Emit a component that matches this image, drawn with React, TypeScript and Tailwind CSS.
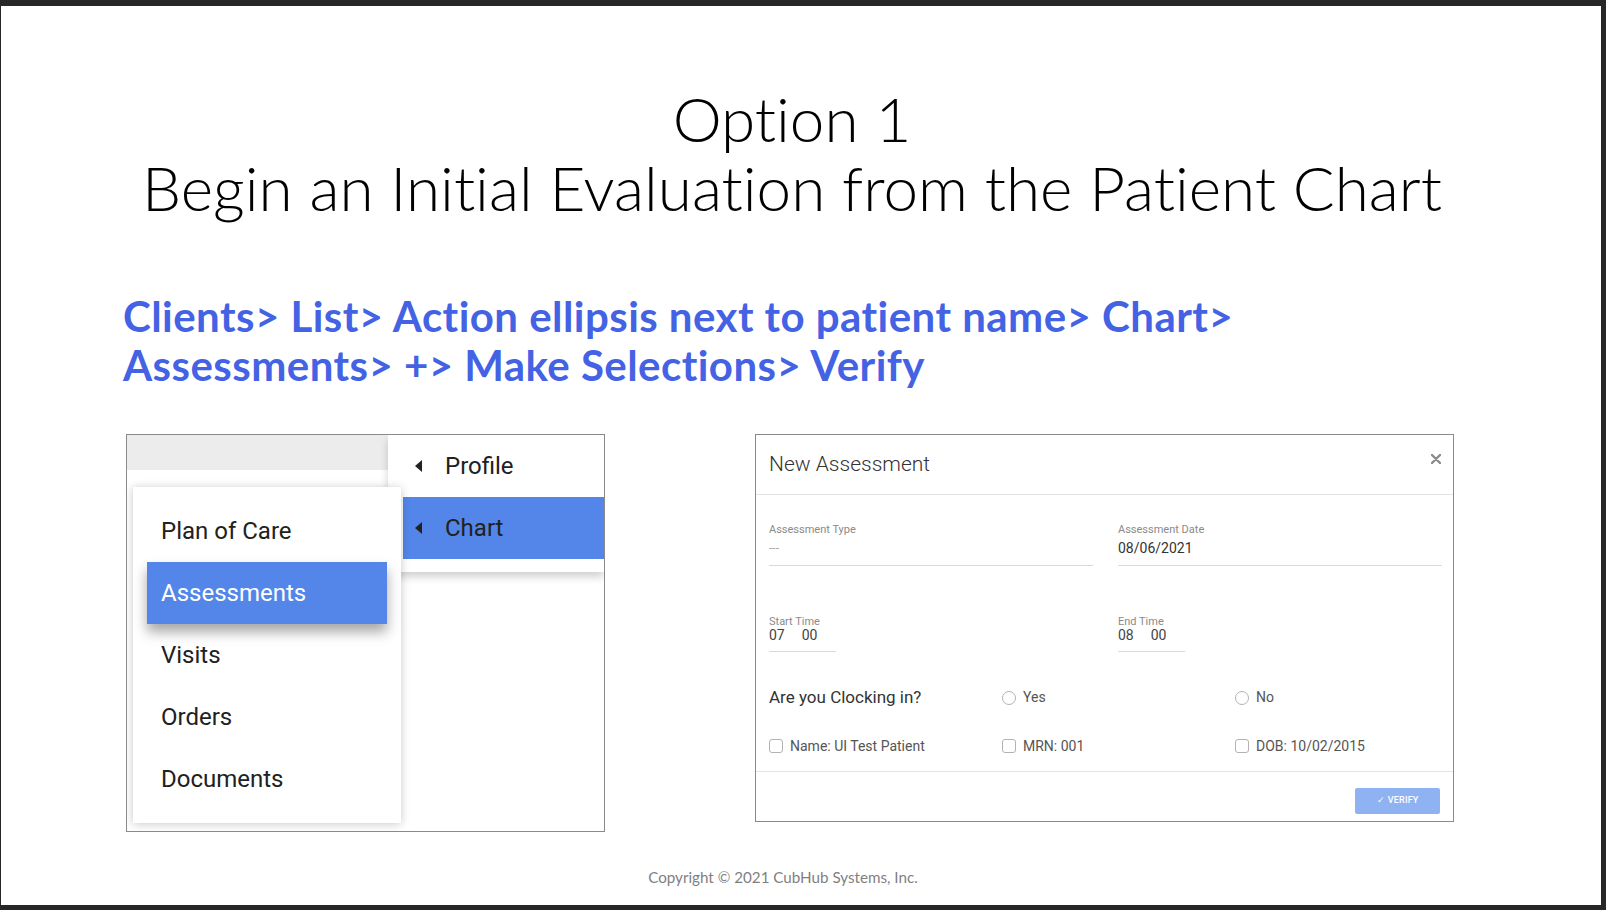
import React from "react";

function Caret({ className }: { className?: string }) {
  return (
    <svg width="7" height="12" viewBox="0 0 7 12" className={className}>
      <polygon points="7,0 7,12 0,6" fill="#222" />
    </svg>
  );
}

function SubMenuRow({ label, active }: { label: string; active?: boolean }) {
  return (
    <div
      className={
        "ml-[15px] h-[62px] pl-[12px] flex items-center gap-[23px] text-[24px] text-[#212121] " +
        (active ? "bg-[#5386e8]" : "")
      }
    >
      <Caret />
      <span>{label}</span>
    </div>
  );
}

function CardRow({ label, active }: { label: string; active?: boolean }) {
  return (
    <div
      className={
        "mx-[14px] h-[62px] px-[14px] flex items-center text-[24px] " +
        (active
          ? "bg-[#5386e8] text-white shadow-[0_8px_12px_rgba(0,0,0,0.35)] relative"
          : "text-[#212121]")
      }
    >
      {label}
    </div>
  );
}

function Radio({ label }: { label: string }) {
  return (
    <div className="flex items-center gap-[7px]">
      <span className="w-[14px] h-[14px] rounded-full border border-[#b3b3b3] bg-white" />
      <span className="text-[14px] text-[#555]">{label}</span>
    </div>
  );
}

function Check({ label }: { label: string }) {
  return (
    <div className="flex items-center gap-[7px]">
      <span className="w-[14px] h-[14px] rounded-[3px] border border-[#b3b3b3] bg-white" />
      <span className="text-[14px] text-[#555]">{label}</span>
    </div>
  );
}

export default function App() {
  return (
    <div className="w-[1606px] h-[910px] bg-[#272727] pt-[6px] pl-px pr-[5px] pb-[5px] overflow-hidden">
      <div className="w-full h-full bg-white flex flex-col">
        {/* Title */}
        <div className="mt-[78px] pr-[18px] text-center text-black font-light text-[62px] leading-[69px] font-[Lato,sans-serif] [font-variant-ligatures:none]">
          <div>Option 1</div>
          <div>Begin an Initial Evaluation from the Patient Chart</div>
        </div>

        {/* Instructions */}
        <div className="mt-[70px] ml-[122px] text-[#4462e4] font-bold text-[42px] leading-[49px] tracking-[0.45px] font-[Lato,sans-serif] [font-variant-ligatures:none]">
          <div>Clients&gt; List&gt; Action ellipsis next to patient name&gt; Chart&gt;</div>
          <div>Assessments&gt; +&gt; Make Selections&gt; Verify</div>
        </div>

        {/* Screens */}
        <div className="mt-[44px] flex items-start">
          {/* Left menu screenshot */}
          <div className="ml-[125px] w-[479px] h-[398px] border border-[#8a8a8a] relative bg-white font-[Roboto,sans-serif] overflow-hidden">
            <div className="flex">
              <div className="w-[261px] h-[35px] bg-[#ececec]" />
              <div className="flex-1 bg-white pb-[13px] shadow-[0_5px_8px_rgba(0,0,0,0.18)] flex flex-col">
                <SubMenuRow label="Profile" />
                <SubMenuRow label="Chart" active />
              </div>
            </div>
            <div className="absolute left-[6px] top-[52px] w-[268px] h-[336px] bg-white shadow-[0_1px_9px_rgba(0,0,0,0.22)] py-[13px] flex flex-col">
              <CardRow label="Plan of Care" />
              <CardRow label="Assessments" active />
              <CardRow label="Visits" />
              <CardRow label="Orders" />
              <CardRow label="Documents" />
            </div>
          </div>

          {/* Dialog screenshot */}
          <div className="ml-[150px] w-[699px] h-[388px] border border-[#8a8a8a] bg-white flex flex-col font-[Roboto,sans-serif]">
            <div className="h-[60px] border-b border-[#e3e3e3] flex justify-between pl-[13px] pr-[12px]">
              <span className="self-center text-[21px] font-light text-[#333]">New Assessment</span>
              <svg width="10" height="10" viewBox="0 0 10 10" className="mt-[19px]">
                <path d="M1 1 L9 9 M9 1 L1 9" stroke="#8a8a8a" strokeWidth="2.4" strokeLinecap="round" />
              </svg>
            </div>

            <div className="h-[277px] border-b border-[#e3e3e3] pl-[13px] pr-[11px] pt-[28px]">
              <div className="grid grid-cols-[324px_324px] gap-x-[25px]">
                <div className="pb-[8px] border-b border-[#d9d9d9]">
                  <div className="text-[11px] leading-[13px] text-[#8a8a8a]">Assessment Type</div>
                  <div className="mt-[3px] text-[12px] leading-[18px] text-[#aaa]">---</div>
                </div>
                <div className="pb-[8px] border-b border-[#d9d9d9]">
                  <div className="text-[11px] leading-[13px] text-[#8a8a8a]">Assessment Date</div>
                  <div className="mt-[3px] text-[14px] leading-[18px] text-[#333]">08/06/2021</div>
                </div>
              </div>

              <div className="mt-[50px] grid grid-cols-[324px_324px] gap-x-[25px]">
                <div className="w-[67px] pb-[9px] border-b border-[#d9d9d9]">
                  <div className="text-[11px] leading-[12px] text-[#8a8a8a] whitespace-nowrap">Start Time</div>
                  <div className="text-[14px] leading-[14px] text-[#444] flex gap-[17px]">
                    <span>07</span>
                    <span>00</span>
                  </div>
                </div>
                <div className="w-[67px] pb-[9px] border-b border-[#d9d9d9]">
                  <div className="text-[11px] leading-[12px] text-[#8a8a8a] whitespace-nowrap">End Time</div>
                  <div className="text-[14px] leading-[14px] text-[#444] flex gap-[17px]">
                    <span>08</span>
                    <span>00</span>
                  </div>
                </div>
              </div>

              <div className="mt-[33px] h-[24px] grid grid-cols-[233px_233px_1fr] items-center">
                <span className="text-[17px] text-[#333]">Are you Clocking in?</span>
                <Radio label="Yes" />
                <Radio label="No" />
              </div>

              <div className="mt-[25px] h-[24px] grid grid-cols-[233px_233px_1fr] items-center">
                <Check label="Name: UI Test Patient" />
                <Check label="MRN: 001" />
                <Check label="DOB: 10/02/2015" />
              </div>
            </div>

            <div className="flex-1 flex justify-end items-start pt-[16px] pr-[13px]">
              <div className="w-[85px] h-[26px] bg-[#8fb2f3] rounded-[2px] flex items-center justify-center gap-[3px] text-white text-[9px] font-medium tracking-[0.2px]">
                <span className="text-[9px]">✓</span>
                <span>VERIFY</span>
              </div>
            </div>
          </div>
        </div>

        {/* Footer */}
        <div className="mt-[35px] pr-[36px] text-center text-[15.2px] leading-[20px] text-[#7f7f7f] font-[Lato,sans-serif]">
          Copyright © 2021 CubHub Systems, Inc.
        </div>
      </div>
    </div>
  );
}
